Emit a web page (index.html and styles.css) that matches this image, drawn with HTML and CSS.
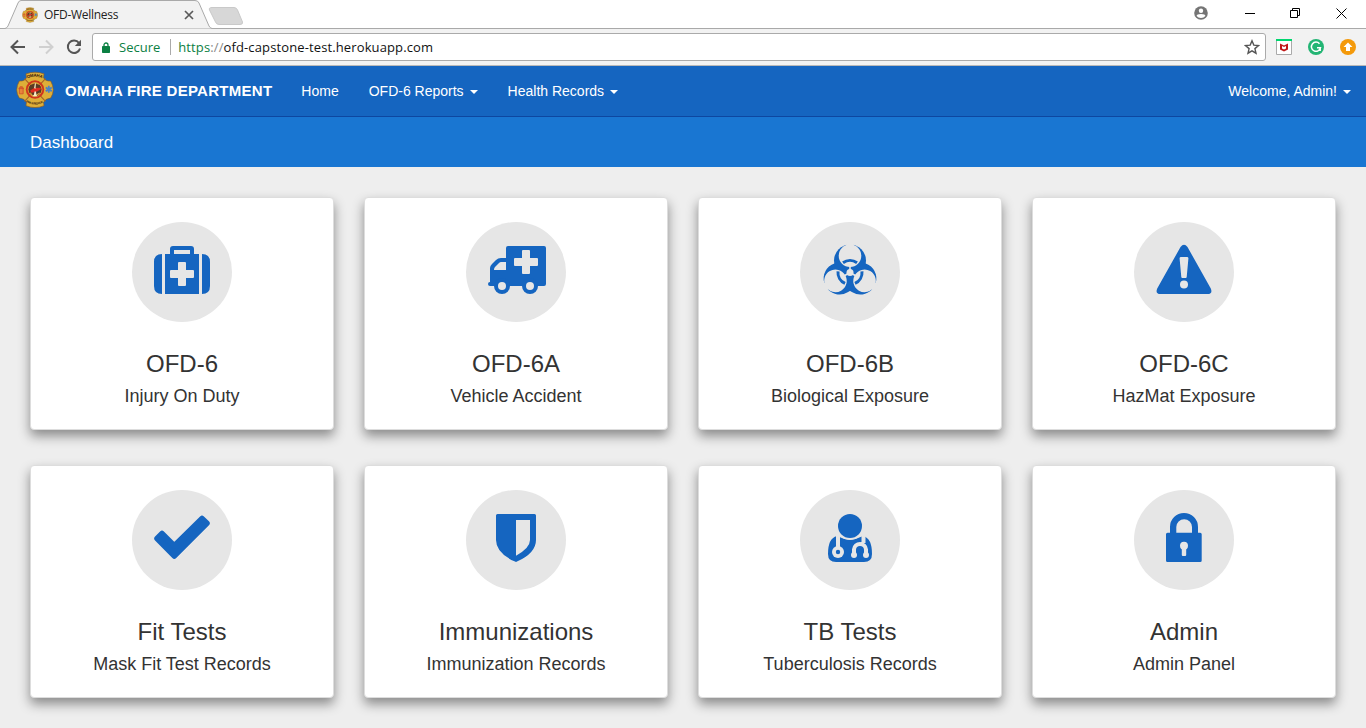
FILE: index.html
```html
<!DOCTYPE html>
<html lang="en">
<head>
<meta charset="utf-8">
<title>OFD-Wellness</title>
<link rel="stylesheet" href="styles.css">
</head>
<body>
<svg class="defs" width="0" height="0" aria-hidden="true">
  <defs>
    <symbol id="badge" viewBox="0 0 40 40">
      <path d="M10.500 3Q20-.5 29.500 3L29 7Q31 11 36.500 10.500Q42 20 36.500 28.500Q31 29 29 33L29.500 36.500Q20 40.500 10.500 36.500L11 33Q9 29 3.500 28.500Q-2 20 3.500 10.500Q9 11 11 7Z" fill="#deae38" stroke="#8d5a20" stroke-width=".7"/>
      <path d="M9 8l22 24M31 8L9 32" stroke="#a76525" stroke-width="1.200"/>
      <circle cx="20" cy="19.500" r="9.700" fill="#d0341e"/>
      <circle cx="20" cy="19.500" r="7.300" fill="#5a3a25" stroke="#e3a12e" stroke-width=".9"/>
      <path d="M16 14q4-3 8 0M15 23q2 4 5 3t5-3" stroke="#d9a03a" stroke-width="1.200" fill="none"/>
      <path d="M15 20.500l4-2.500 7-.5v2l-5 2.500-5 .8z" fill="#e02a20"/>
      <path d="M20 13l-1 5 1.500 1L21 13zM19.500 21.500l-.7 3.500-1.300 1.500h5L21.500 25l-.5-3.500z" fill="#f8e9c6"/>
      <path d="M3.500 17.500h4V24h-4zM2.700 18.500h5.600M4 16.500h3" fill="#e8853a" stroke="#d0502a" stroke-width=".9"/>
      <path d="M34.500 15.500v7.500M31.300 17.400l6.400 3.800M37.700 17.400l-6.400 3.800" stroke="#4a82c5" stroke-width="1.900"/>
      <path id="arc-top" d="M12 8Q20 4 28 8" fill="none"/>
      <path id="arc-bottom" d="M10.500 32.500Q20 38 29.500 32.500" fill="none"/>
      <text class="badge-text"><textPath href="#arc-top" textLength="16">OMAHA</textPath></text>
      <text class="badge-text small"><textPath href="#arc-bottom" textLength="19">FIRE &amp; RESCUE</textPath></text>
    </symbol>
  </defs>
</svg>

<div class="tabstrip">
  <svg class="tab-shapes" width="260" height="29" aria-hidden="true">
    <path d="M0 28.5H5Q7 28 8 26L18 3Q19 .5 21 .5H195Q198 .5 199 3L209 26Q210 28 212 28.5H260V29H0Z" fill="#f2f2f2" stroke="#a9a9a9"/>
    <path d="M212 7.500H234Q236.500 7.500 237.500 10L242.500 22Q243 24.500 240 24.500H219Q216.500 24.500 215.500 22L209.500 10Q208.500 7.500 212 7.500Z" fill="#d7d7d7" stroke="#c9c9c9"/>
  </svg>
  <div class="tab">
    <svg class="favicon"><use href="#badge"/></svg>
    <span class="tab-title">OFD-Wellness</span>
    <svg class="tab-close" viewBox="0 0 10 10"><path d="M1 1l8 8M9 1L1 9" stroke="#5a5a5a" stroke-width="1.700"/></svg>
  </div>
  <div class="window-controls">
    <svg width="14" height="14" viewBox="0 0 14 14"><circle cx="7" cy="7" r="6.800" fill="#757575"/><circle cx="7" cy="4.700" r="2.200" fill="#fff"/><path d="M2.600 10q0-2.100 4.400-2.100T11.400 10Q9.800 12 7 12T2.600 10z" fill="#fff"/></svg>
    <svg width="10" height="11" viewBox="0 0 10 11"><path d="M0 5.500h10" stroke="#000"/></svg>
    <svg width="11" height="11" viewBox="0 0 11 11"><path d="M.5 2.500h7v7h-7zM2.500 2.500v-2h7v7h-2" fill="none" stroke="#000"/></svg>
    <svg width="11" height="11" viewBox="0 0 11 11"><path d="M.5.5l10 10M10.500.5l-10 10" stroke="#000"/></svg>
  </div>
</div>

<div class="toolbar">
  <svg class="tool back" viewBox="0 0 16 16"><path d="M15 8H2M8 1.500L1.500 8 8 14.500" fill="none" stroke="#555" stroke-width="2"/></svg>
  <svg class="tool forward" viewBox="0 0 16 16"><path d="M1 8h13M8 1.500L14.500 8 8 14.500" fill="none" stroke="#d0d0d0" stroke-width="2"/></svg>
  <svg class="tool reload" viewBox="0 0 16 16"><path d="M13 4A6.200 6.200 0 1 0 14 9.500" fill="none" stroke="#555" stroke-width="2"/><path d="M15 .8V7H8.800z" fill="#555"/></svg>
  <div class="omnibox">
    <svg class="padlock" viewBox="0 0 8 11"><path d="M2 5V3a2 2 0 0 1 4 0v2" fill="none" stroke="#0b8043" stroke-width="1.300"/><rect y="4" width="8" height="7" rx=".7" fill="#0b8043"/></svg>
    <span class="secure">Secure</span>
    <span class="divider"></span>
    <span class="url"><span class="scheme">https</span><span class="slashes">://</span>ofd-capstone-test.herokuapp.com</span>
    <svg class="star" viewBox="0 0 16 16"><path d="M8 1.800l1.800 4.300 4.700.4-3.600 3.100 1.100 4.600L8 11.800l-4 2.400 1.100-4.600L1.500 6.500l4.700-.4z" fill="none" stroke="#555" stroke-width="1.400"/></svg>
  </div>
  <div class="extensions">
    <svg viewBox="0 0 16 16"><path d="M.5.5h15v15H.5z" fill="#fff" stroke="#aaa"/><path d="M0 0h16v2H0z" fill="#00d66f"/><path d="M4 4.500l4 2 4-2v6l-4 2-4-2z" fill="#c01818"/><path d="M6 7l2 1 2-1v2.500l-2 1-2-1z" fill="#fff"/></svg>
    <svg viewBox="0 0 16 16"><circle cx="8" cy="8" r="8" fill="#23b574"/><path d="M11.500 4.700A4.600 4.600 0 1 0 12.500 8.700H9M12.200 8.700v3.300" fill="none" stroke="#fff" stroke-width="1.500"/></svg>
    <svg viewBox="0 0 16 16"><circle cx="8" cy="8" r="8" fill="#f49a0b"/><path d="M8 3.500L12.500 8H10v4H6V8H3.500z" fill="#fff"/></svg>
  </div>
</div>

<nav class="navbar">
  <svg class="brand-logo"><use href="#badge"/></svg>
  <span class="brand">OMAHA FIRE DEPARTMENT</span>
  <ul class="nav-links">
    <li>Home</li>
    <li>OFD-6 Reports<i class="caret"></i></li>
    <li>Health Records<i class="caret"></i></li>
  </ul>
  <div class="account">Welcome, Admin!<i class="caret"></i></div>
</nav>
<header class="page-header">Dashboard</header>

<main class="cards">
  <section class="card">
    <svg class="icon" viewBox="0 0 100 100"><path fill-rule="evenodd" d="M30 32v40q-8 0-8-8V40q0-8 8-8zM70 32q8 0 8 8v24q0 8-8 8zM33 32h5v-5q0-3 3-3h18q3 0 3 3v5h5v40H33zM42 28v4h16v-4zM47 40q-1 0-1 1v7h-7q-1 0-1 1v6q0 1 1 1h7v7q0 1 1 1h6q1 0 1-1v-7h7q1 0 1-1v-6q0-1-1-1h-7v-7q0-1-1-1z"/></svg>
    <h3>OFD-6</h3><h4>Injury On Duty</h4>
  </section>
  <section class="card">
    <svg class="icon" viewBox="0 0 100 100"><path fill-rule="evenodd" d="M42 24h36q2 0 2 2v36q0 2-2 2H24q-2 0-2-2t2-2V46q0-2 2-4l4-4q2-2 5-2h5V26q0-2 2-2zM40 40h-5q-1 0-2 1l-4 4q-1 1-1 3h12zM57 28q-1 0-1 1v7h-7q-1 0-1 1v6q0 1 1 1h7v7q0 1 1 1h6q1 0 1-1v-7h7q1 0 1-1v-6q0-1-1-1h-7v-7q0-1-1-1z"/><circle cx="36" cy="64" r="8"/><circle cx="64" cy="64" r="8"/><g class="cutout"><circle cx="36" cy="64" r="4"/><circle cx="64" cy="64" r="4"/></g></svg>
    <h3>OFD-6A</h3><h4>Vehicle Accident</h4>
  </section>
  <section class="card">
    <svg class="icon" viewBox="0 0 100 100">
      <defs>
        <g id="lobe-hole"><circle cx="50" cy="33.700" r="11.300"/><path d="M46.200 20h7.600v8h-7.600zM49.200 44h1.600v6h-1.600z"/></g>
        <path id="ring-part" d="M43 40.700A12 12 0 0 1 57 40.700"/>
      </defs>
      <circle cx="50" cy="38.500" r="16"/><circle cx="50" cy="38.500" r="16" transform="rotate(120 50 50.500)"/><circle cx="50" cy="38.500" r="16" transform="rotate(240 50 50.500)"/>
      <g class="cutout"><use href="#lobe-hole"/><use href="#lobe-hole" transform="rotate(120 50 50.500)"/><use href="#lobe-hole" transform="rotate(240 50 50.500)"/><circle cx="50" cy="50.500" r="3.500"/></g>
      <g class="ring"><use href="#ring-part"/><use href="#ring-part" transform="rotate(120 50 50.500)"/><use href="#ring-part" transform="rotate(240 50 50.500)"/></g>
    </svg>
    <h3>OFD-6B</h3><h4>Biological Exposure</h4>
  </section>
  <section class="card">
    <svg class="icon" viewBox="0 0 100 100"><path fill-rule="evenodd" d="M46.500 25Q50 20.500 53.500 25L76.800 66.500Q79 72 73.500 72H26.500Q21 72 23.200 66.500zM47 35q-1.500 0-1.400 1.500L47.300 55q.1 1 1 1h3.400q.9 0 1-1L54.400 36.500Q54.500 35 53 35z"/><circle class="cutout" cx="50" cy="62.500" r="4"/></svg>
    <h3>OFD-6C</h3><h4>HazMat Exposure</h4>
  </section>
  <section class="card">
    <svg class="icon" viewBox="0 0 100 100"><path class="rounded" d="M30 43.500L25 48.500 42.300 66 75 33.300 70 28.400 42.300 55.700z"/></svg>
    <h3>Fit Tests</h3><h4>Mask Fit Test Records</h4>
  </section>
  <section class="card">
    <svg class="icon" viewBox="0 0 100 100"><path fill-rule="evenodd" d="M31.500 24h37q1.500 0 1.500 1.500V50Q70 63 51 71.600q-1 .6-2 0Q30 63 30 50V25.500Q30 24 31.500 24zM50 30v35.700Q64 58 64 50V30z"/></svg>
    <h3>Immunizations</h3><h4>Immunization Records</h4>
  </section>
  <section class="card">
    <svg class="icon" viewBox="0 0 100 100">
      <path d="M37 46Q28 48 28 64Q28 72 36 72H64Q72 72 72 64Q72 48 63 46Q50 53 37 46z"/>
      <g class="tubes"><path d="M38 45v14M63.500 44v9M54 65V59.500a6 6 0 0 1 6-5.500 6 6 0 0 1 6 5.500v5.500"/></g>
      <g class="cutout"><circle cx="38" cy="62" r="6"/><circle cx="54" cy="65" r="3"/><circle cx="66" cy="65" r="3"/><circle cx="50" cy="36" r="14"/></g>
      <circle cx="38" cy="62" r="2.200"/><circle cx="50" cy="36" r="12"/>
    </svg>
    <h3>TB Tests</h3><h4>Tuberculosis Records</h4>
  </section>
  <section class="card">
    <svg class="icon" viewBox="0 0 100 100"><path fill-rule="evenodd" d="M33.500 42.700H36V37a14 14 0 0 1 28 0v5.700h2.200q1.500 0 1.500 1.500v26.300q0 1.500-1.500 1.500H33.500q-1.500 0-1.500-1.500V44.200q0-1.500 1.500-1.500zM42.300 42.700H58V37a7.850 7.850 0 0 0-15.700 0z"/><g class="cutout"><circle cx="50" cy="55.700" r="4"/><path d="M47.800 57h4.400v8q0 1-1 1h-2.400q-1 0-1-1z"/></g></svg>
    <h3>Admin</h3><h4>Admin Panel</h4>
  </section>
</main>
</body>
</html>
```
FILE: styles.css
```css
* { box-sizing: border-box; }
body {
  margin: 0;
  height: 728px;
  overflow: hidden;
  background: #eee;
  color: #333;
  font-family: "Liberation Sans", Arial, sans-serif;
}
svg { display: block; flex: none; }
.defs { position: absolute; }
.badge-text { font: bold 4.5px "Liberation Sans", sans-serif; fill: #38200f; }
.badge-text.small { font-size: 3px; }

.tabstrip {
  position: relative;
  height: 29px;
  display: flex;
  justify-content: space-between;
  background: #fff;
  border-bottom: 1px solid #a9a9a9;
}
.tab-shapes { position: absolute; left: 0; top: 0; }
.tab {
  position: relative;
  display: flex;
  align-items: center;
  width: 194px;
  height: 30px;
  padding-left: 22px;
  font: 12px "Open Sans", sans-serif;
  color: #222;
}
.favicon { width: 16px; height: 16px; }
.tab-title { margin: -1px 0 0 6px; letter-spacing: -.28px; }
.tab-close { width: 10px; height: 10px; margin-left: auto; }
.window-controls {
  display: flex;
  align-items: center;
  height: 26px;
  padding-right: 19px;
}
.window-controls svg + svg { margin-left: 37px; }
.window-controls svg:nth-child(3) { margin-left: 35px; }
.window-controls svg:nth-child(4) { margin-left: 35px; }

.toolbar {
  height: 37px;
  display: flex;
  align-items: center;
  background: #f2f2f2;
  border-bottom: 1px solid #b9b9b9;
  padding: 0 10px;
}
.tool { width: 16px; height: 16px; }
.forward, .reload { margin-left: 12px; }
.omnibox {
  display: flex;
  align-items: center;
  width: 1174px;
  height: 28px;
  margin-left: 10px;
  padding: 0 5px 0 9px;
  background: #fff;
  border: 1px solid #aaa;
  border-radius: 3px;
  font: 13px "Open Sans", sans-serif;
}
.padlock { width: 8px; height: 11px; }
.secure { margin-left: 9px; color: #0b8043; }
.divider { width: 1px; height: 16px; margin: 0 7px 0 10px; background: #aaa; }
.url { color: #111; letter-spacing: .12px; }
.scheme { color: #0b8043; }
.slashes { color: #888; }
.star { width: 16px; height: 16px; margin-left: auto; }
.extensions { display: flex; gap: 16px; margin-left: 10px; }
.extensions svg { width: 16px; height: 16px; }

.navbar {
  height: 51px;
  display: flex;
  align-items: center;
  padding: 0 15px;
  background: #1565c0;
  border-bottom: 1px solid #0d47a1;
  color: #fff;
  font-size: 14px;
}
.brand-logo { width: 40px; height: 38px; margin-top: -2px; }
.brand { margin: -2px 0 0 10px; font-size: 15px; font-weight: bold; letter-spacing: .27px; }
.nav-links { display: flex; gap: 30px; margin: 0 0 0 29px; padding: 0; list-style: none; }
.account { margin-left: auto; }
.caret {
  display: inline-block;
  margin-left: 6px;
  vertical-align: middle;
  border: 4px solid transparent;
  border-top-color: #fff;
  border-bottom: 0;
}
.page-header {
  height: 50px;
  padding: 1px 0 0 30px;
  background: #1976d2;
  color: #fff;
  font-size: 17px;
  line-height: 50px;
}

.cards {
  display: grid;
  grid-template-columns: repeat(4, 304px);
  gap: 35px 30px;
  padding: 30px;
}
.card {
  height: 233px;
  display: flex;
  flex-direction: column;
  align-items: center;
  padding-top: 24px;
  background: #fff;
  border: 1px solid #ddd;
  border-radius: 4px;
  box-shadow: 0 6px 12px rgba(0, 0, 0, .42);
}
.icon {
  width: 100px;
  height: 100px;
  border-radius: 50%;
  background: #e6e6e6;
  fill: #1565c0;
}
.cutout { fill: #e6e6e6; }
.ring { fill: none; stroke: #1565c0; stroke-width: 3; }
.rounded { stroke: #1565c0; stroke-width: 5.500; stroke-linejoin: round; }
.tubes { fill: none; stroke: #e6e6e6; stroke-width: 4; }
.card h3 { margin: 28px 0 0; font-size: 24px; font-weight: 400; line-height: 28px; }
.card h4 { margin: 8px 0 0; font-size: 18px; font-weight: 400; line-height: 20px; }
```
